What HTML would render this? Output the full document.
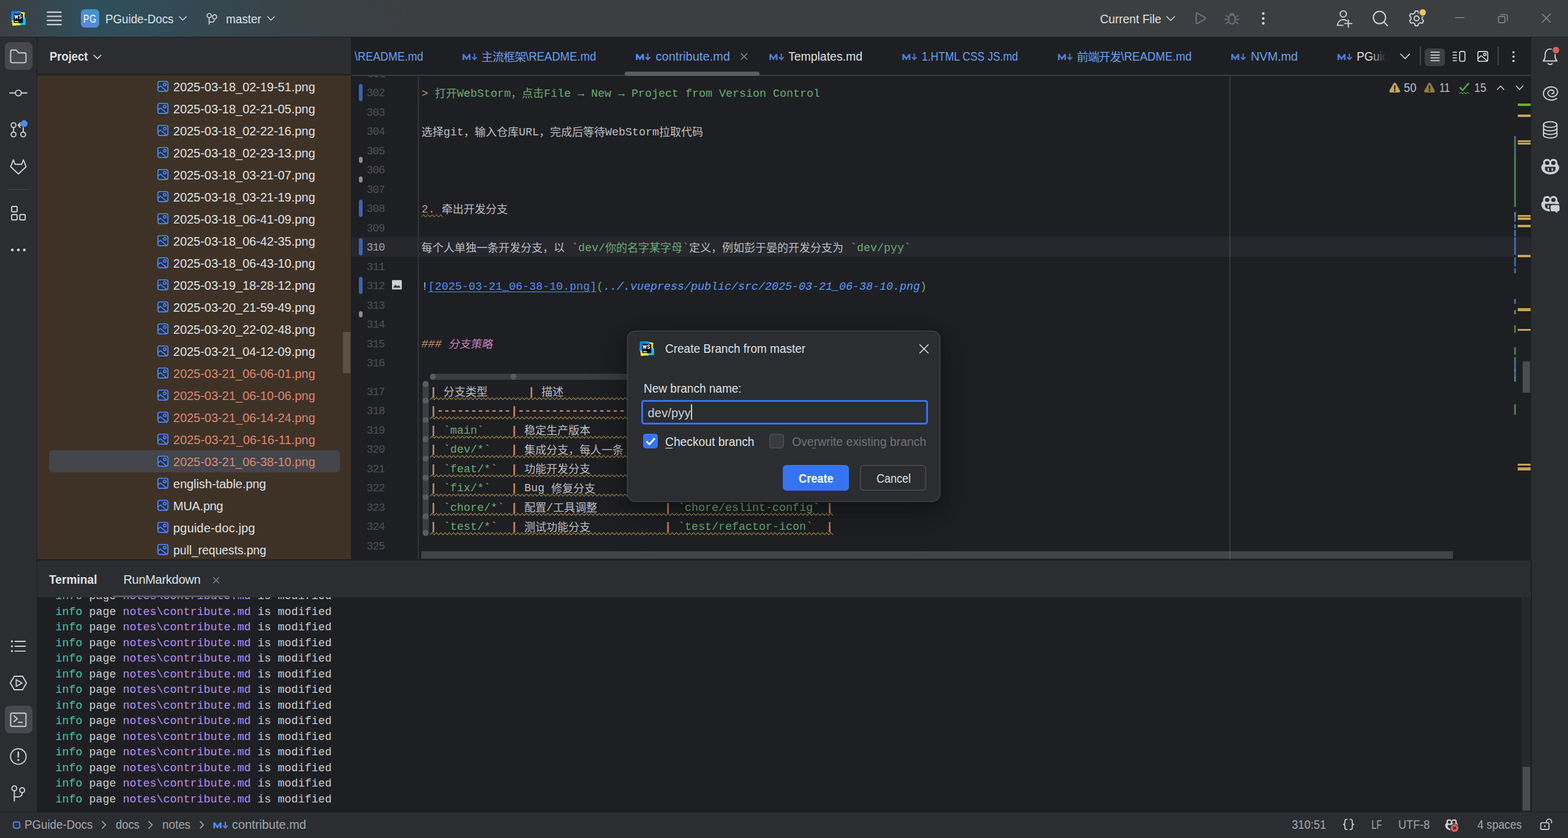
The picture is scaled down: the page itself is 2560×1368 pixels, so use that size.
<!DOCTYPE html>
<html lang="en"><head><meta charset="utf-8"><title>WebStorm – Create Branch from master</title>
<style>
html,body{margin:0;padding:0;background:#1e1f22}
body{width:2560px;height:1368px;position:relative;overflow:hidden;font-family:"Liberation Sans",sans-serif}
.a{position:absolute}
.t{position:absolute;white-space:pre;line-height:1;font-family:"Liberation Sans",sans-serif}
.m{font-family:"Liberation Mono",monospace}
.tl{position:absolute;left:90.500px;white-space:pre;line-height:1;font-family:"Liberation Mono",monospace;font-size:18.333px;color:#c9ccd2}
.ti{color:#45c8a8}.tp{color:#b78cf2}
svg{position:absolute;left:0;top:0;overflow:visible}
.ct{font-family:"Liberation Mono","Noto Sans CJK SC",monospace;font-size:18px}
.tt{font-family:"Liberation Sans","Noto Sans CJK SC",sans-serif;font-size:19px;letter-spacing:-1px}
</style></head>
<body>
<div class="a" style="left:0px;top:0px;width:2560px;height:60px;background:#3c3f41;background:linear-gradient(90deg,#3c3f42 0,#38454c 60px,#2f4f5b 150px,#324b56 260px,#37454c 400px,#3b4044 560px,#3c3f41 700px);"></div>
<div class="a" style="left:0px;top:60px;width:2560px;height:1px;background:#1e1f22;"></div>
<div class="a" style="left:132px;top:15px;width:30px;height:30px;border-radius:6.5px;background:linear-gradient(45deg,#5f86e6 10%,#4491cf 70%,#3f9ac6)"></div>
<div class="t" style="left:127px;top:20.6px;width:40px;text-align:center;font-size:19px;color:#fff;transform:scaleX(.74);letter-spacing:1.2px">PG</div>
<div class="t" style="left:171.5px;top:21.3px;font-size:20px;color:#dfe1e5;transform:scaleX(0.937);transform-origin:0 50%;">PGuide-Docs</div>
<div class="t" style="left:369px;top:21.3px;font-size:20px;color:#dfe1e5;transform:scaleX(0.941);transform-origin:0 50%;">master</div>
<div class="t" style="left:1796px;top:21.3px;font-size:20px;color:#dfe1e5;transform:scaleX(0.957);transform-origin:0 50%;">Current File</div>
<div class="a" style="left:0px;top:61px;width:60px;height:1264px;background:#2b2d30;"></div>
<div class="a" style="left:60px;top:61px;width:1px;height:853px;background:#1e1f22;"></div>
<div class="a" style="left:7.5px;top:69px;width:45px;height:45px;background:#47494e;border-radius:8px;"></div>
<div class="a" style="left:12px;top:309px;width:36px;height:1px;background:#43454a;"></div>
<div class="a" style="left:7.5px;top:1152px;width:45px;height:45px;background:#47494e;border-radius:8px;"></div>
<div class="a" style="left:2500px;top:61px;width:60px;height:1264px;background:#2b2d30;"></div>
<div class="a" style="left:61px;top:61px;width:512px;height:61px;background:#2b2d30;"></div>
<div class="a" style="left:61px;top:121px;width:512px;height:2px;background:#1e1f22;"></div>
<div class="a" style="left:61px;top:123px;width:512px;height:790px;background:#3e3226;"></div>
<div class="a" style="left:573px;top:61px;width:1px;height:852px;background:#1e1f22;"></div>
<div class="t" style="left:80.5px;top:81.9px;font-size:20px;color:#dfe1e5;font-weight:700;transform:scaleX(0.922);transform-origin:0 50%;">Project</div>
<div class="a" style="left:560px;top:542px;width:12px;height:67px;background:rgba(170,165,160,.28);"></div>
<div class="a" style="left:79.5px;top:735px;width:475.5px;height:36px;background:#43454a;border-radius:6px;"></div>
<div class="t" style="left:282.8px;top:132.1px;font-size:20px;color:#dfe1e5;letter-spacing:-0.03px;">2025-03-18_02-19-51.png</div>
<div class="t" style="left:282.8px;top:168.1px;font-size:20px;color:#dfe1e5;letter-spacing:-0.03px;">2025-03-18_02-21-05.png</div>
<div class="t" style="left:282.8px;top:204.1px;font-size:20px;color:#dfe1e5;letter-spacing:-0.03px;">2025-03-18_02-22-16.png</div>
<div class="t" style="left:282.8px;top:240.1px;font-size:20px;color:#dfe1e5;letter-spacing:-0.03px;">2025-03-18_02-23-13.png</div>
<div class="t" style="left:282.8px;top:276.1px;font-size:20px;color:#dfe1e5;letter-spacing:-0.03px;">2025-03-18_03-21-07.png</div>
<div class="t" style="left:282.8px;top:312.1px;font-size:20px;color:#dfe1e5;letter-spacing:-0.03px;">2025-03-18_03-21-19.png</div>
<div class="t" style="left:282.8px;top:348.1px;font-size:20px;color:#dfe1e5;letter-spacing:-0.03px;">2025-03-18_06-41-09.png</div>
<div class="t" style="left:282.8px;top:384.1px;font-size:20px;color:#dfe1e5;letter-spacing:-0.03px;">2025-03-18_06-42-35.png</div>
<div class="t" style="left:282.8px;top:420.1px;font-size:20px;color:#dfe1e5;letter-spacing:-0.03px;">2025-03-18_06-43-10.png</div>
<div class="t" style="left:282.8px;top:456.1px;font-size:20px;color:#dfe1e5;letter-spacing:-0.03px;">2025-03-19_18-28-12.png</div>
<div class="t" style="left:282.8px;top:492.1px;font-size:20px;color:#dfe1e5;letter-spacing:-0.03px;">2025-03-20_21-59-49.png</div>
<div class="t" style="left:282.8px;top:528.1px;font-size:20px;color:#dfe1e5;letter-spacing:-0.03px;">2025-03-20_22-02-48.png</div>
<div class="t" style="left:282.8px;top:564.1px;font-size:20px;color:#dfe1e5;letter-spacing:-0.03px;">2025-03-21_04-12-09.png</div>
<div class="t" style="left:282.8px;top:600.1px;font-size:20px;color:#dc8673;letter-spacing:-0.03px;">2025-03-21_06-06-01.png</div>
<div class="t" style="left:282.8px;top:636.1px;font-size:20px;color:#dc8673;letter-spacing:-0.03px;">2025-03-21_06-10-06.png</div>
<div class="t" style="left:282.8px;top:672.1px;font-size:20px;color:#dc8673;letter-spacing:-0.03px;">2025-03-21_06-14-24.png</div>
<div class="t" style="left:282.8px;top:708.1px;font-size:20px;color:#dc8673;letter-spacing:0.04px;">2025-03-21_06-16-11.png</div>
<div class="t" style="left:282.8px;top:744.1px;font-size:20px;color:#dc8673;letter-spacing:-0.03px;">2025-03-21_06-38-10.png</div>
<div class="t" style="left:282.8px;top:780.1px;font-size:20px;color:#dfe1e5;letter-spacing:-0.04px;">english-table.png</div>
<div class="t" style="left:282.8px;top:816.1px;font-size:20px;color:#dfe1e5;letter-spacing:-0.28px;">MUA.png</div>
<div class="t" style="left:282.8px;top:852.1px;font-size:20px;color:#dfe1e5;letter-spacing:0.19px;">pguide-doc.jpg</div>
<div class="t" style="left:282.8px;top:888.1px;font-size:20px;color:#dfe1e5;transform:scaleX(0.961);transform-origin:0 50%;">pull_requests.png</div>
<div class="a" style="left:574px;top:61px;width:1926px;height:852px;background:#1e1f22;"></div>
<div class="a" style="left:574px;top:387px;width:1925px;height:31.5px;background:#26282e;"></div>
<div class="t" style="left:579px;top:81.9px;font-size:20px;color:#659ff2;transform:scaleX(0.9);transform-origin:0 50%;">\README.md</div>
<div class="t" style="left:1070.5px;top:81.9px;font-size:20px;color:#659ff2;letter-spacing:0.02px;">contribute.md</div>
<div class="t" style="left:1287px;top:81.9px;font-size:20px;color:#dfe1e5;transform:scaleX(0.972);transform-origin:0 50%;">Templates.md</div>
<div class="t" style="left:1505px;top:81.9px;font-size:20px;color:#659ff2;transform:scaleX(0.876);transform-origin:0 50%;">1.HTML CSS JS.md</div>
<div class="t" style="left:2042px;top:81.9px;font-size:20px;color:#659ff2;letter-spacing:-0.16px;">NVM.md</div>
<div class="t" style="left:858.2px;top:81.9px;font-size:20px;color:#659ff2;transform:scaleX(0.926);transform-origin:0 50%;">\README.md</div>
<div class="t" style="left:1830.2px;top:81.9px;font-size:20px;color:#659ff2;transform:scaleX(0.929);transform-origin:0 50%;">\README.md</div>
<div class="a" style="left:2210px;top:70px;width:54px;height:44px;overflow:hidden">
<div class="t" style="left:4.5px;top:11.9px;font-size:20px;color:#dfe1e5;transform:scaleX(0.937);transform-origin:0 50%;">PGuide-Docs</div>
</div>
<div class="a" style="left:2236px;top:70px;width:44px;height:44px;background:linear-gradient(90deg,rgba(30,31,34,0),#1e1f22 62%)"></div>
<div class="a" style="left:2318.2px;top:76px;width:1.5px;height:30px;background:#43454a;"></div>
<div class="a" style="left:2326.4px;top:78.5px;width:33px;height:29.5px;background:#3d3f42;border-radius:6px;"></div>
<div class="a" style="left:2445.2px;top:76px;width:1.5px;height:30px;background:#43454a;"></div>
<div class="a" style="left:574px;top:122px;width:1926px;height:1.8px;background:#393b40;"></div>
<div class="a" style="left:1020px;top:117px;width:219.5px;height:6.5px;background:#5a5d63;border-radius:3.25px;"></div>
<div class="a" style="left:682px;top:123.8px;width:2px;height:789px;background:#313438;"></div>
<div class="a" style="left:574px;top:123.5px;width:110px;height:12px;overflow:hidden"><div class="t m" style="left:25.5px;top:-11.4px;font-size:18px;letter-spacing:-1.05px;color:#4b5059">301</div></div>
<div class="t m" style="left:598.6px;top:143.4px;font-size:18px;color:#4b5059;letter-spacing:-1.05px;">302</div>
<div class="t m" style="left:598.6px;top:174.9px;font-size:18px;color:#4b5059;letter-spacing:-1.05px;">303</div>
<div class="t m" style="left:598.6px;top:206.4px;font-size:18px;color:#4b5059;letter-spacing:-1.05px;">304</div>
<div class="t m" style="left:598.6px;top:237.9px;font-size:18px;color:#4b5059;letter-spacing:-1.05px;">305</div>
<div class="t m" style="left:598.6px;top:269.4px;font-size:18px;color:#4b5059;letter-spacing:-1.05px;">306</div>
<div class="t m" style="left:598.6px;top:300.9px;font-size:18px;color:#4b5059;letter-spacing:-1.05px;">307</div>
<div class="t m" style="left:598.6px;top:332.4px;font-size:18px;color:#4b5059;letter-spacing:-1.05px;">308</div>
<div class="t m" style="left:598.6px;top:363.9px;font-size:18px;color:#4b5059;letter-spacing:-1.05px;">309</div>
<div class="t m" style="left:598.6px;top:395.4px;font-size:18px;color:#a1a3ab;letter-spacing:-1.05px;">310</div>
<div class="t m" style="left:598.6px;top:426.9px;font-size:18px;color:#4b5059;letter-spacing:-1.05px;">311</div>
<div class="t m" style="left:598.6px;top:458.4px;font-size:18px;color:#4b5059;letter-spacing:-1.05px;">312</div>
<div class="t m" style="left:598.6px;top:489.9px;font-size:18px;color:#4b5059;letter-spacing:-1.05px;">313</div>
<div class="t m" style="left:598.6px;top:521.4px;font-size:18px;color:#4b5059;letter-spacing:-1.05px;">314</div>
<div class="t m" style="left:598.6px;top:552.9px;font-size:18px;color:#4b5059;letter-spacing:-1.05px;">315</div>
<div class="t m" style="left:598.6px;top:584.4px;font-size:18px;color:#4b5059;letter-spacing:-1.05px;">316</div>
<div class="t m" style="left:598.6px;top:630.6px;font-size:18px;color:#4b5059;letter-spacing:-1.05px;">317</div>
<div class="t m" style="left:598.6px;top:662.1px;font-size:18px;color:#4b5059;letter-spacing:-1.05px;">318</div>
<div class="t m" style="left:598.6px;top:693.6px;font-size:18px;color:#4b5059;letter-spacing:-1.05px;">319</div>
<div class="t m" style="left:598.6px;top:725.1px;font-size:18px;color:#4b5059;letter-spacing:-1.05px;">320</div>
<div class="t m" style="left:598.6px;top:756.6px;font-size:18px;color:#4b5059;letter-spacing:-1.05px;">321</div>
<div class="t m" style="left:598.6px;top:788.1px;font-size:18px;color:#4b5059;letter-spacing:-1.05px;">322</div>
<div class="t m" style="left:598.6px;top:819.6px;font-size:18px;color:#4b5059;letter-spacing:-1.05px;">323</div>
<div class="t m" style="left:598.6px;top:851.1px;font-size:18px;color:#4b5059;letter-spacing:-1.05px;">324</div>
<div class="t m" style="left:598.6px;top:882.6px;font-size:18px;color:#4b5059;letter-spacing:-1.05px;">325</div>
<div class="a" style="left:585.5px;top:136.75px;width:6px;height:28.5px;background:#3a64b8;border-radius:3px;"></div>
<div class="a" style="left:585.5px;top:325.75px;width:6px;height:28.5px;background:#3a64b8;border-radius:3px;"></div>
<div class="a" style="left:585.5px;top:388.75px;width:6px;height:28.5px;background:#3a64b8;border-radius:3px;"></div>
<div class="a" style="left:585.5px;top:451.75px;width:6px;height:28.5px;background:#3a64b8;border-radius:3px;"></div>
<div class="a" style="left:585.5px;top:256.3px;width:6px;height:9.4px;background:#8a8d94;border-radius:3px;"></div>
<div class="a" style="left:585.5px;top:288.3px;width:6px;height:9.4px;background:#8a8d94;border-radius:3px;"></div>
<div class="a" style="left:585.5px;top:508.3px;width:6px;height:9.4px;background:#8a8d94;border-radius:3px;"></div>
<div class="t m" style="left:688px;top:144.5px;font-size:18.333px;color:#cf8e6d;">&gt;</div>
<div class="t m" style="left:746px;top:144.5px;font-size:18.333px;color:#6aab73;">WebStorm</div>
<div class="t m" style="left:888px;top:144.5px;font-size:18.333px;color:#6aab73;">File → New → Project from Version Control</div>
<div class="t m" style="left:724px;top:207.5px;font-size:18.333px;color:#bcbec4;">git</div>
<div class="t m" style="left:847px;top:207.5px;font-size:18.333px;color:#bcbec4;">URL</div>
<div class="t m" style="left:988px;top:207.5px;font-size:18.333px;color:#bcbec4;">WebStorm</div>
<div class="t m" style="left:688px;top:333.5px;font-size:18.333px;color:#cf8e6d;">2.</div>
<div class="t m" style="left:933px;top:396.5px;font-size:18.333px;color:#cf8e6d;">`</div>
<div class="t m" style="left:944px;top:396.5px;font-size:18.333px;color:#6aab73;">dev/</div>
<div class="t m" style="left:1114px;top:396.5px;font-size:18.333px;color:#cf8e6d;">`</div>
<div class="t m" style="left:1388px;top:396.5px;font-size:18.333px;color:#cf8e6d;">`</div>
<div class="t m" style="left:1399px;top:396.5px;font-size:18.333px;color:#6aab73;">dev/pyy</div>
<div class="t m" style="left:1476px;top:396.5px;font-size:18.333px;color:#cf8e6d;">`</div>
<div class="t m" style="left:688px;top:459.5px;font-size:18.333px;color:#bcbec4;">!</div>
<div class="t m" style="left:699px;top:459.5px;font-size:18.333px;color:#548af7;text-decoration:underline;text-decoration-thickness:1.3px;text-underline-offset:3px;">[2025-03-21_06-38-10.png]</div>
<div class="t m" style="left:974px;top:459.5px;font-size:18.333px;color:#6aab73;">(</div>
<div class="t m" style="left:985px;top:459.5px;font-size:18.333px;color:#5c9cf5;font-style:italic;">../.vuepress/public/src/2025-03-21_06-38-10.png</div>
<div class="t m" style="left:1502px;top:459.5px;font-size:18.333px;color:#6aab73;">)</div>
<div class="t m" style="left:688px;top:554px;font-size:18.333px;color:#cf8e6d;font-style:italic;">###</div>
<div class="t m" style="left:702px;top:631.8px;font-size:18.333px;color:#cf8e6d;font-weight:700;">|</div>
<div class="t m" style="left:862px;top:631.8px;font-size:18.333px;color:#cf8e6d;font-weight:700;">|</div>
<div class="t m" style="left:702px;top:663.3px;font-size:18.333px;color:#cf8e6d;font-weight:700;">|</div>
<div class="t m" style="left:713px;top:663.3px;font-size:18.333px;color:#cf8e6d;font-weight:700;">-----------</div>
<div class="t m" style="left:834px;top:663.3px;font-size:18.333px;color:#cf8e6d;font-weight:700;">|</div>
<div class="t m" style="left:845px;top:663.3px;font-size:18.333px;color:#cf8e6d;font-weight:700;">------------------------------</div>
<div class="t m" style="left:702px;top:694.8px;font-size:18.333px;color:#cf8e6d;font-weight:700;">|</div>
<div class="t m" style="left:724px;top:694.8px;font-size:18.333px;color:#cf8e6d;">`</div>
<div class="t m" style="left:735px;top:694.8px;font-size:18.333px;color:#6aab73;">main</div>
<div class="t m" style="left:779px;top:694.8px;font-size:18.333px;color:#cf8e6d;">`</div>
<div class="t m" style="left:834px;top:694.8px;font-size:18.333px;color:#cf8e6d;font-weight:700;">|</div>
<div class="t m" style="left:702px;top:726.3px;font-size:18.333px;color:#cf8e6d;font-weight:700;">|</div>
<div class="t m" style="left:724px;top:726.3px;font-size:18.333px;color:#cf8e6d;">`</div>
<div class="t m" style="left:735px;top:726.3px;font-size:18.333px;color:#6aab73;">dev/*</div>
<div class="t m" style="left:790px;top:726.3px;font-size:18.333px;color:#cf8e6d;">`</div>
<div class="t m" style="left:834px;top:726.3px;font-size:18.333px;color:#cf8e6d;font-weight:700;">|</div>
<div class="t m" style="left:702px;top:757.8px;font-size:18.333px;color:#cf8e6d;font-weight:700;">|</div>
<div class="t m" style="left:724px;top:757.8px;font-size:18.333px;color:#cf8e6d;">`</div>
<div class="t m" style="left:735px;top:757.8px;font-size:18.333px;color:#6aab73;">feat/*</div>
<div class="t m" style="left:801px;top:757.8px;font-size:18.333px;color:#cf8e6d;">`</div>
<div class="t m" style="left:834px;top:757.8px;font-size:18.333px;color:#cf8e6d;font-weight:700;">|</div>
<div class="t m" style="left:702px;top:789.3px;font-size:18.333px;color:#cf8e6d;font-weight:700;">|</div>
<div class="t m" style="left:724px;top:789.3px;font-size:18.333px;color:#cf8e6d;">`</div>
<div class="t m" style="left:735px;top:789.3px;font-size:18.333px;color:#6aab73;">fix/*</div>
<div class="t m" style="left:790px;top:789.3px;font-size:18.333px;color:#cf8e6d;">`</div>
<div class="t m" style="left:834px;top:789.3px;font-size:18.333px;color:#cf8e6d;font-weight:700;">|</div>
<div class="t m" style="left:856px;top:789.3px;font-size:18.333px;color:#bcbec4;">Bug </div>
<div class="t m" style="left:702px;top:820.8px;font-size:18.333px;color:#cf8e6d;font-weight:700;">|</div>
<div class="t m" style="left:724px;top:820.8px;font-size:18.333px;color:#cf8e6d;">`</div>
<div class="t m" style="left:735px;top:820.8px;font-size:18.333px;color:#6aab73;">chore/*</div>
<div class="t m" style="left:812px;top:820.8px;font-size:18.333px;color:#cf8e6d;">`</div>
<div class="t m" style="left:834px;top:820.8px;font-size:18.333px;color:#cf8e6d;font-weight:700;">|</div>
<div class="t m" style="left:892px;top:820.8px;font-size:18.333px;color:#bcbec4;">/</div>
<div class="t m" style="left:1085px;top:820.8px;font-size:18.333px;color:#cf8e6d;font-weight:700;">|</div>
<div class="t m" style="left:1107px;top:820.8px;font-size:18.333px;color:#cf8e6d;">`</div>
<div class="t m" style="left:1118px;top:820.8px;font-size:18.333px;color:#6aab73;">chore/eslint-config</div>
<div class="t m" style="left:1327px;top:820.8px;font-size:18.333px;color:#cf8e6d;">`</div>
<div class="t m" style="left:1349px;top:820.8px;font-size:18.333px;color:#cf8e6d;font-weight:700;">|</div>
<div class="t m" style="left:702px;top:852.3px;font-size:18.333px;color:#cf8e6d;font-weight:700;">|</div>
<div class="t m" style="left:724px;top:852.3px;font-size:18.333px;color:#cf8e6d;">`</div>
<div class="t m" style="left:735px;top:852.3px;font-size:18.333px;color:#6aab73;">test/*</div>
<div class="t m" style="left:801px;top:852.3px;font-size:18.333px;color:#cf8e6d;">`</div>
<div class="t m" style="left:834px;top:852.3px;font-size:18.333px;color:#cf8e6d;font-weight:700;">|</div>
<div class="t m" style="left:1085px;top:852.3px;font-size:18.333px;color:#cf8e6d;font-weight:700;">|</div>
<div class="t m" style="left:1107px;top:852.3px;font-size:18.333px;color:#cf8e6d;">`</div>
<div class="t m" style="left:1118px;top:852.3px;font-size:18.333px;color:#6aab73;">test/refactor-icon</div>
<div class="t m" style="left:1316px;top:852.3px;font-size:18.333px;color:#cf8e6d;">`</div>
<div class="t m" style="left:1349px;top:852.3px;font-size:18.333px;color:#cf8e6d;font-weight:700;">|</div>
<div class="a" style="left:702px;top:610px;width:660px;height:9.5px;background:#3b3d41;border-radius:4.7px;"></div>
<div class="a" style="left:701.6px;top:610px;width:9.5px;height:9.5px;background:#595b60;border-radius:4.7px;"></div>
<div class="a" style="left:833.9px;top:610px;width:9.5px;height:9.5px;background:#595b60;border-radius:4.7px;"></div>
<div class="a" style="left:1085.9px;top:610px;width:9.5px;height:9.5px;background:#595b60;border-radius:4.7px;"></div>
<div class="a" style="left:1349.9px;top:610px;width:9.5px;height:9.5px;background:#595b60;border-radius:4.7px;"></div>
<div class="a" style="left:690px;top:622.5px;width:9.5px;height:252px;background:#3b3d41;border-radius:4.7px;"></div>
<div class="a" style="left:690px;top:622.3px;width:9.5px;height:9.5px;background:#595b60;border-radius:4.7px;"></div>
<div class="a" style="left:690px;top:649.05px;width:9.5px;height:9.5px;background:#595b60;border-radius:4.7px;"></div>
<div class="a" style="left:690px;top:680.8px;width:9.5px;height:9.5px;background:#595b60;border-radius:4.7px;"></div>
<div class="a" style="left:690px;top:712.3px;width:9.5px;height:9.5px;background:#595b60;border-radius:4.7px;"></div>
<div class="a" style="left:690px;top:743.8px;width:9.5px;height:9.5px;background:#595b60;border-radius:4.7px;"></div>
<div class="a" style="left:690px;top:775.3px;width:9.5px;height:9.5px;background:#595b60;border-radius:4.7px;"></div>
<div class="a" style="left:690px;top:806.8px;width:9.5px;height:9.5px;background:#595b60;border-radius:4.7px;"></div>
<div class="a" style="left:690px;top:838.3px;width:9.5px;height:9.5px;background:#595b60;border-radius:4.7px;"></div>
<div class="a" style="left:690px;top:865.3px;width:9.5px;height:9.5px;background:#595b60;border-radius:4.7px;"></div>
<div class="a" style="left:688px;top:899.7px;width:1684.3px;height:12.3px;background:#434446;"></div>
<div class="a" style="left:2007px;top:123.8px;width:2px;height:789px;background:rgba(232,238,255,.12);"></div>
<div class="t" style="left:2291.8px;top:133.5px;font-size:19.5px;color:#bcbec4;transform:scaleX(0.95);transform-origin:0 50%;">50</div>
<div class="t" style="left:2349.8px;top:133.5px;font-size:19.5px;color:#bcbec4;transform:scaleX(0.86);transform-origin:0 50%;">11</div>
<div class="t" style="left:2406.5px;top:133.5px;font-size:19.5px;color:#bcbec4;transform:scaleX(0.895);transform-origin:0 50%;">15</div>
<div class="a" style="left:2478px;top:187px;width:21px;height:4px;background:#c9a44f;"></div>
<div class="a" style="left:2478px;top:229px;width:21px;height:3px;background:#c9a44f;"></div>
<div class="a" style="left:2478px;top:233px;width:21px;height:3px;background:#c9a44f;"></div>
<div class="a" style="left:2478px;top:350.8px;width:21px;height:3.2px;background:#c9a44f;"></div>
<div class="a" style="left:2478px;top:355px;width:21px;height:3.7px;background:#c9a44f;"></div>
<div class="a" style="left:2478px;top:366.8px;width:21px;height:4px;background:#c9a44f;"></div>
<div class="a" style="left:2478px;top:415.5px;width:21px;height:4.5px;background:#c9a44f;"></div>
<div class="a" style="left:2478px;top:503px;width:21px;height:5px;background:#c9a44f;"></div>
<div class="a" style="left:2478px;top:537px;width:21px;height:3px;background:#c9a44f;"></div>
<div class="a" style="left:2478px;top:757px;width:21px;height:3px;background:#c9a44f;"></div>
<div class="a" style="left:2478px;top:763px;width:21px;height:5px;background:#c9a44f;"></div>
<div class="a" style="left:2478px;top:169.2px;width:21px;height:3.7px;background:#6bb01f;"></div>
<div class="a" style="left:2472px;top:222px;width:3px;height:7.5px;background:#40699c;"></div>
<div class="a" style="left:2472px;top:229.5px;width:3px;height:13.3px;background:#4a7a52;"></div>
<div class="a" style="left:2472px;top:242.8px;width:3px;height:9.2px;background:#40699c;"></div>
<div class="a" style="left:2472px;top:252px;width:3px;height:86px;background:#4a7a52;"></div>
<div class="a" style="left:2472px;top:346px;width:3px;height:7.7px;background:#6f737a;"></div>
<div class="a" style="left:2472px;top:353.7px;width:3px;height:7.9px;background:#40699c;"></div>
<div class="a" style="left:2472px;top:365.8px;width:3px;height:7.6px;background:#40699c;"></div>
<div class="a" style="left:2472px;top:374.7px;width:3px;height:11px;background:#40699c;"></div>
<div class="a" style="left:2472px;top:386.6px;width:3px;height:29.4px;background:#40699c;"></div>
<div class="a" style="left:2472px;top:420px;width:3px;height:15px;background:#40699c;"></div>
<div class="a" style="left:2472px;top:437.5px;width:3px;height:8.5px;background:#40699c;"></div>
<div class="a" style="left:2472px;top:488px;width:3px;height:8px;background:#40699c;"></div>
<div class="a" style="left:2472px;top:505.5px;width:3px;height:7.5px;background:#6f737a;"></div>
<div class="a" style="left:2472px;top:531px;width:3px;height:12px;background:#4a7a52;"></div>
<div class="a" style="left:2472px;top:567px;width:3px;height:12px;background:#4a7a52;"></div>
<div class="a" style="left:2472px;top:583.2px;width:3px;height:7.9px;background:#4a7a52;"></div>
<div class="a" style="left:2472px;top:591.1px;width:3px;height:11.9px;background:#40699c;"></div>
<div class="a" style="left:2472px;top:603px;width:3px;height:3px;background:#6f737a;"></div>
<div class="a" style="left:2472px;top:606px;width:3px;height:9px;background:#40699c;"></div>
<div class="a" style="left:2472px;top:615px;width:3px;height:7.5px;background:#6f737a;"></div>
<div class="a" style="left:2472px;top:660px;width:3px;height:16.5px;background:#4a7a52;"></div>
<div class="a" style="left:2484.5px;top:588px;width:15px;height:54px;background:#222326;"></div>
<div class="a" style="left:2486px;top:590px;width:12.2px;height:51px;background:#4b4c4f;"></div>
<div class="a" style="left:61px;top:913px;width:2439px;height:2px;background:#1e1f22;"></div>
<div class="a" style="left:61px;top:915px;width:2439px;height:60px;background:#2b2d30;"></div>
<div class="a" style="left:61px;top:975px;width:2439px;height:350px;background:#1e1f22;"></div>
<div class="t" style="left:80.3px;top:935.8px;font-size:20px;color:#dfe1e5;font-weight:700;transform:scaleX(0.959);transform-origin:0 50%;">Terminal</div>
<div class="t" style="left:201.4px;top:935.8px;font-size:20px;color:#dfe1e5;letter-spacing:-0.28px;">RunMarkdown</div>
<div class="a" style="left:184px;top:972px;width:191px;height:3px;overflow:hidden"><div class="a" style="left:0;top:0;width:191px;height:6.5px;border-radius:3.25px;background:#54575c"></div></div>
<div class="a" style="left:61px;top:975px;width:2439px;height:350px;overflow:hidden"><div class="a" style="left:-61px;top:-975px"><div class="tl" style="top:965.3px"><span class="ti">info</span> page <span class="tp">notes\contribute.md</span> is modified</div><div class="tl" style="top:990.8px"><span class="ti">info</span> page <span class="tp">notes\contribute.md</span> is modified</div><div class="tl" style="top:1016.3px"><span class="ti">info</span> page <span class="tp">notes\contribute.md</span> is modified</div><div class="tl" style="top:1041.8px"><span class="ti">info</span> page <span class="tp">notes\contribute.md</span> is modified</div><div class="tl" style="top:1067.3px"><span class="ti">info</span> page <span class="tp">notes\contribute.md</span> is modified</div><div class="tl" style="top:1092.8px"><span class="ti">info</span> page <span class="tp">notes\contribute.md</span> is modified</div><div class="tl" style="top:1118.3px"><span class="ti">info</span> page <span class="tp">notes\contribute.md</span> is modified</div><div class="tl" style="top:1143.8px"><span class="ti">info</span> page <span class="tp">notes\contribute.md</span> is modified</div><div class="tl" style="top:1169.3px"><span class="ti">info</span> page <span class="tp">notes\contribute.md</span> is modified</div><div class="tl" style="top:1194.8px"><span class="ti">info</span> page <span class="tp">notes\contribute.md</span> is modified</div><div class="tl" style="top:1220.3px"><span class="ti">info</span> page <span class="tp">notes\contribute.md</span> is modified</div><div class="tl" style="top:1245.8px"><span class="ti">info</span> page <span class="tp">notes\contribute.md</span> is modified</div><div class="tl" style="top:1271.3px"><span class="ti">info</span> page <span class="tp">notes\contribute.md</span> is modified</div><div class="tl" style="top:1296.8px"><span class="ti">info</span> page <span class="tp">notes\contribute.md</span> is modified</div></div></div>
<div class="a" style="left:2484px;top:975px;width:15px;height:349.5px;background:#27282c;"></div>
<div class="a" style="left:2486px;top:1252px;width:12.2px;height:71px;background:#4b4c4f;"></div>
<div class="a" style="left:2499px;top:915px;width:1.5px;height:410px;background:#1e1f22;"></div>
<div class="a" style="left:0px;top:1325px;width:2560px;height:1px;background:#1e1f22;"></div>
<div class="a" style="left:0px;top:1326px;width:2560px;height:42px;background:#2b2d30;"></div>
<div class="t" style="left:39.5px;top:1335.5px;font-size:20px;color:#a3a6ad;transform:scaleX(0.936);transform-origin:0 50%;">PGuide-Docs</div>
<div class="t" style="left:188.8px;top:1335.5px;font-size:20px;color:#a3a6ad;transform:scaleX(0.916);transform-origin:0 50%;">docs</div>
<div class="t" style="left:264.5px;top:1335.5px;font-size:20px;color:#a3a6ad;transform:scaleX(0.94);transform-origin:0 50%;">notes</div>
<div class="t" style="left:378.8px;top:1335.5px;font-size:20px;color:#a3a6ad;">contribute.md</div>
<div class="t" style="left:2108.8px;top:1335.6px;font-size:20px;color:#a3a6ad;transform:scaleX(0.919);transform-origin:0 50%;">310:51</div>
<div class="t" style="left:2238.8px;top:1335.6px;font-size:20px;color:#a3a6ad;transform:scaleX(0.737);transform-origin:0 50%;">LF</div>
<div class="t" style="left:2282.5px;top:1335.6px;font-size:20px;color:#a3a6ad;transform:scaleX(0.905);transform-origin:0 50%;">UTF-8</div>
<div class="t" style="left:2412px;top:1335.6px;font-size:20px;color:#a3a6ad;transform:scaleX(0.906);transform-origin:0 50%;">4 spaces</div>
<svg width="2560" height="1368" viewBox="0 0 2560 1368">
<g transform="translate(18,18)"><defs><linearGradient id="wsg0" x1="0" y1="0" x2="1" y2="1"><stop offset="0" stop-color="#087cfa"/><stop offset=".55" stop-color="#07a5f5"/><stop offset="1" stop-color="#12d6e8"/></linearGradient></defs><path d="M.6 1.2Q.6.3 1.6.3L14.5 0 24 12 23.6 22.5 12 23.2 0 15.8Z" fill="url(#wsg0)"/><path d="M15.5 1.6L22.6 2.6 21.2 13.5ZM1.4 15.6L2.4 24 16 23 10 16.5Z" fill="#f7ef3c"/><path d="M9 22.8L16 23 23.6 22.4 23.8 17Z" fill="#1fd1a0" opacity=".0"/><rect x="4.5" y="4.4" width="14.8" height="14.9" fill="#000"/><rect x="6.2" y="16.4" width="6" height="1.5" fill="#fff"/><path d="M6 6.2l1.25 5.5 1.4-4.3 1.4 4.3 1.25-5.5M16.9 7.3c-.45-.7-1.1-1-1.85-1-1 0-1.7.55-1.7 1.35 0 .85.6 1.15 1.75 1.45 1.2.3 1.85.65 1.85 1.5 0 .85-.75 1.4-1.85 1.4-.85 0-1.6-.35-2.1-1.05" fill="none" stroke="#fff" stroke-width="1.4" stroke-linejoin="miter"/></g>
<path d="M77.4 19.9 H99.8" stroke="#ced0d6" stroke-width="2.2" stroke-linecap="round"/>
<path d="M77.4 26.6 H99.8" stroke="#ced0d6" stroke-width="2.2" stroke-linecap="round"/>
<path d="M77.4 33.4 H99.8" stroke="#ced0d6" stroke-width="2.2" stroke-linecap="round"/>
<path d="M77.4 40.1 H99.8" stroke="#ced0d6" stroke-width="2.2" stroke-linecap="round"/>
<path d="M293 27.25 l5.5 5.5 l5.5 -5.5" fill="none" stroke="#ced0d6" stroke-width="1.6" stroke-linecap="round" stroke-linejoin="round"/>
<g fill="none" stroke="#ced0d6" stroke-width="1.7" stroke-linecap="round"><circle cx="341.5" cy="25.4" r="3.4"/><circle cx="350.3" cy="27.6" r="3.4"/><path d="M341.5 28.8V39.5M350.3 31v.6a4.6 4.6 0 0 1-4.6 4.6H341.5"/></g>
<path d="M437 27.25 l5.5 5.5 l5.5 -5.5" fill="none" stroke="#ced0d6" stroke-width="1.6" stroke-linecap="round" stroke-linejoin="round"/>
<path d="M1904.8 27.05 l6.5 6.5 l6.5 -6.5" fill="none" stroke="#ced0d6" stroke-width="1.6" stroke-linecap="round" stroke-linejoin="round"/>
<path d="M1953 22.4V37.2a1.3 1.3 0 0 0 2 1.1l12.6-7.4a1.3 1.3 0 0 0 0-2.2L1955 21.3a1.3 1.3 0 0 0-2 1.1Z" fill="none" stroke="#6f737a" stroke-width="2" stroke-linejoin="round"/>
<g fill="none" stroke="#6f737a" stroke-width="1.8" stroke-linecap="round"><path d="M2006.4 29.5a5 5 0 0 1 10 0v4.6a5 5 0 0 1-10 0Z"/><path d="M2007.6 25.6a3.9 4.6 0 0 1 7.6 0"/><path d="M2006 28l-4.3-2.6M2006 31.6h-5.6M2006 35.6l-4.3 2.6M2016.8 28l4.3-2.6M2016.8 31.6h5.6M2016.8 35.6l4.3 2.6"/></g>
<circle cx="2062.5" cy="22" r="2.1" fill="#dfe1e5"/>
<circle cx="2062.5" cy="30.2" r="2.1" fill="#dfe1e5"/>
<circle cx="2062.5" cy="38.2" r="2.1" fill="#dfe1e5"/>
<g fill="none" stroke="#ced0d6" stroke-width="1.9" stroke-linecap="round" stroke-linejoin="round"><circle cx="2193.1" cy="22.7" r="5.1"/><path d="M2192.5 41.4H2183.4c.8-5.6 4.6-9.4 9.7-9.4 2.3 0 4.3.7 5.9 2"/><path d="M2201.4 32.6v11.6M2195.6 38.4h11.6"/></g>
<g fill="none" stroke="#ced0d6" stroke-width="2" stroke-linecap="round"><circle cx="2252.2" cy="28.6" r="10"/><path d="M2259.6 35.9L2265.3 42"/></g>
<path d="M2309.7 21.3L2310.6 18L2315 18L2315.9 21.3L2318.7 23L2322.1 22.1L2324.3 25.9L2321.9 28.4L2321.9 31.6L2324.3 34.1L2322.1 37.9L2318.7 37L2315.9 38.7L2315 42L2310.6 42L2309.7 38.7L2306.9 37L2303.5 37.9L2301.3 34.1L2303.7 31.6L2303.7 28.4L2301.3 25.9L2303.5 22.1L2306.9 23Z" fill="none" stroke="#ced0d6" stroke-width="1.9" stroke-linejoin="round"/><circle cx="2312.8" cy="30" r="4" fill="none" stroke="#ced0d6" stroke-width="1.9"/>
<circle cx="2322.8" cy="20.3" r="6.6" fill="#3c3f41"/><circle cx="2322.8" cy="20.3" r="5.2" fill="#f2c55c"/>
<path d="M2376 28.8H2391" stroke="#8b8d92" stroke-width="1.4"/>
<g fill="none" stroke="#8b8d92" stroke-width="1.4"><rect x="2446.5" y="26.7" width="10.6" height="10.3" rx="2"/><path d="M2449.8 23.6h8.2a3 3 0 0 1 3 3v7.7"/></g>
<path d="M2517.5 22.5l14.2 14.2M2531.7 22.5l-14.2 14.2" stroke="#8b8d92" stroke-width="1.4"/>
<path d="M17.4 84.3a2.5 2.5 0 0 1 2.5-2.5h6.6l4 4.5h9.4a2.5 2.5 0 0 1 2.5 2.5v11.1a2.5 2.5 0 0 1-2.5 2.5h-20a2.5 2.5 0 0 1-2.5-2.5Z" fill="none" stroke="#ced0d6" stroke-width="1.9" stroke-linecap="round" stroke-linejoin="round"/>
<g fill="none" stroke="#ced0d6" stroke-width="1.9" stroke-linecap="round" stroke-linejoin="round"><circle cx="30" cy="151.8" r="4.7"/><path d="M16 151.8h9.3M34.7 151.8H44"/></g>
<g fill="none" stroke="#ced0d6" stroke-width="1.9" stroke-linecap="round" stroke-linejoin="round" stroke-width="1.8"><circle cx="22.1" cy="204.3" r="3.9"/><circle cx="22.1" cy="219.5" r="3.9"/><circle cx="37.9" cy="219.5" r="3.9"/><path d="M22.1 208.2v7.4M37.9 208.5v7.1M33 200.6l-3.6 3.7 3.6 3.7M29.6 204.3h4.4"/></g>
<circle cx="39.5" cy="201.8" r="5.5" fill="#548af7"/>
<path d="M21.7 261L17.5 272.2 30 284 42.5 272.2 38.3 261 35.3 268.3H24.7Z" fill="none" stroke="#ced0d6" stroke-width="1.9" stroke-linecap="round" stroke-linejoin="round"/>
<g fill="none" stroke="#ced0d6" stroke-width="1.9" stroke-linecap="round" stroke-linejoin="round"><rect x="19" y="337" width="9" height="8.7" rx="2"/><rect x="19" y="350.2" width="9" height="8.8" rx="2"/><rect x="32.2" y="350.2" width="9" height="8.8" rx="2"/></g>
<circle cx="20.1" cy="408" r="2.3" fill="#ced0d6"/>
<circle cx="30" cy="408" r="2.3" fill="#ced0d6"/>
<circle cx="39.7" cy="408" r="2.3" fill="#ced0d6"/>
<circle cx="19.5" cy="1047" r="1.7" fill="#ced0d6"/><path d="M24.6 1047H41.2" stroke="#ced0d6" stroke-width="1.9" stroke-linecap="round"/>
<circle cx="19.5" cy="1055" r="1.7" fill="#ced0d6"/><path d="M24.6 1055H41.2" stroke="#ced0d6" stroke-width="1.9" stroke-linecap="round"/>
<circle cx="19.5" cy="1062.9" r="1.7" fill="#ced0d6"/><path d="M24.6 1062.9H41.2" stroke="#ced0d6" stroke-width="1.9" stroke-linecap="round"/>
<g fill="none" stroke="#ced0d6" stroke-width="1.9" stroke-linecap="round" stroke-linejoin="round"><path d="M16.8 1115L23.4 1104H36.8L43.2 1115 36.8 1126H23.4Z"/><path d="M26.5 1109.5V1120.5L36 1115Z"/></g>
<g fill="none" stroke="#ced0d6" stroke-width="1.9" stroke-linecap="round" stroke-linejoin="round"><rect x="17.4" y="1164.2" width="25" height="21.6" rx="2.2"/><path d="M23 1168.7l5.3 4.6-5.3 4.7M30.2 1179.2h6"/></g>
<g fill="none" stroke="#ced0d6" stroke-width="1.9" stroke-linecap="round" stroke-linejoin="round"><circle cx="29.9" cy="1234.9" r="12.7"/><path d="M29.9 1228v7.6" stroke-width="2.4"/></g><circle cx="29.9" cy="1240.8" r="1.7" fill="#ced0d6"/>
<g fill="none" stroke="#ced0d6" stroke-width="1.9" stroke-linecap="round" stroke-linejoin="round"><circle cx="23.4" cy="1287" r="4"/><circle cx="36.2" cy="1290" r="4"/><path d="M23.4 1291v16.5M36.2 1294v.9a6 6 0 0 1-6 6H23.4"/></g>
<g fill="none" stroke="#ced0d6" stroke-width="1.9" stroke-linecap="round" stroke-linejoin="round"><path d="M2519.7 99.5c2.3-2.6 3-5.2 3-8.3v-3.2a8.1 8.1 0 0 1 16.2 0v3.2c0 3.1.7 5.7 3 8.3Z"/><path d="M2527.6 103.4a3.3 2.2 0 0 0 6.5 0"/></g>
<circle cx="2540.3" cy="81.7" r="6.9" fill="#2b2d30"/><circle cx="2540.3" cy="81.7" r="5.5" fill="#db5c5c"/>
<path d="M2541.5 160.8c-3 2.3-8.3 3.3-13.3 1.8-5.7-1.7-9-6.3-8.3-11.3.8-5.3 6.3-9.7 12.8-9.6 6.1.1 10.7 3.8 10.3 8.9-.4 4.5-4.8 7.7-9.5 7.3-4.1-.4-6.8-3.4-6.2-6.7.5-2.7 3.3-4.5 6.2-4.2 2.3.3 3.7 1.9 3.4 3.7-.3 1.5-1.7 2.3-3.2 2.2" fill="none" stroke="#ced0d6" stroke-width="1.9" stroke-linecap="round" stroke-linejoin="round"/>
<g fill="none" stroke="#ced0d6" stroke-width="1.9" stroke-linecap="round" stroke-linejoin="round"><ellipse cx="2531" cy="203.3" rx="11" ry="4.6"/><path d="M2520 203.3v17.4c0 2.5 4.9 4.6 11 4.6s11-2.1 11-4.6V203.3M2520 209.1c0 2.5 4.9 4.6 11 4.6s11-2.1 11-4.6M2520 214.9c0 2.5 4.9 4.6 11 4.6s11-2.1 11-4.6"/></g>
<g transform="translate(2531,272)"><path d="M-11.6-6.8a5.6 5.6 0 0 1 5.6-5.6h.8a5.2 5.2 0 0 1 5.2 3.4a5.2 5.2 0 0 1 5.2-3.4h.8a5.6 5.6 0 0 1 5.6 5.6v2.6c2 1.4 3 3.4 3 5.4c0 6.3-6.6 11.6-14.6 11.6s-14.6-5.3-14.6-11.6c0-2 1-4 3-5.4Z" fill="#ced0d6"/><rect x="-8.5" y="-9.3" width="7" height="6.4" rx="2.8" fill="#2b2d30"/><rect x="1.6" y="-9.3" width="7" height="6.4" rx="2.8" fill="#2b2d30"/><path d="M-8.5 0.2h17.1v4.4c0 2.6-4 4.4-8.5 4.4s-8.6-1.8-8.6-4.4Z" fill="#2b2d30"/><rect x="-4.3" y="2.2" width="2.3" height="4.8" rx="1.1" fill="#ced0d6"/><rect x="2.1" y="2.2" width="2.3" height="4.8" rx="1.1" fill="#ced0d6"/></g>
<g transform="translate(2531,332.5)"><path d="M-11.6-6.8a5.6 5.6 0 0 1 5.6-5.6h.8a5.2 5.2 0 0 1 5.2 3.4a5.2 5.2 0 0 1 5.2-3.4h.8a5.6 5.6 0 0 1 5.6 5.6v2.6c2 1.4 3 3.4 3 5.4c0 6.3-6.6 11.6-14.6 11.6s-14.6-5.3-14.6-11.6c0-2 1-4 3-5.4Z" fill="#ced0d6"/><rect x="-8.5" y="-9.3" width="7" height="6.4" rx="2.8" fill="#2b2d30"/><rect x="1.6" y="-9.3" width="7" height="6.4" rx="2.8" fill="#2b2d30"/><path d="M-8.5 0.2h17.1v4.4c0 2.6-4 4.4-8.5 4.4s-8.6-1.8-8.6-4.4Z" fill="#2b2d30"/><rect x="-4.3" y="2.2" width="2.3" height="4.8" rx="1.1" fill="#ced0d6"/><rect x="2.1" y="2.2" width="2.3" height="4.8" rx="1.1" fill="#ced0d6"/><path d="M-.8 4.6a3.8 3.8 0 0 1 3.8-3.8h9.8a3.8 3.8 0 0 1 3.8 3.8v5.4a3.8 3.8 0 0 1-3.8 3.8h-.2l.6 3.8-4.7-3.8h-5.5a3.8 3.8 0 0 1-3.8-3.8Z" fill="#2b2d30"/><path d="M.6 4.9a2.7 2.7 0 0 1 2.7-2.7h9.2a2.7 2.7 0 0 1 2.7 2.7v4.9a2.7 2.7 0 0 1-2.7 2.7h-1.4l.5 3.2-4-3.2h-4.3a2.7 2.7 0 0 1-2.7-2.7Z" fill="#ced0d6"/></g>
<path d="M153.25 90.1 l5.75 5.8 l5.75 -5.8" fill="none" stroke="#ced0d6" stroke-width="1.6" stroke-linecap="round" stroke-linejoin="round"/>
<defs><g id="imgf"><rect x=".85" y=".85" width="16.4" height="16.4" rx="2.8" fill="#25324d" stroke="#548af7" stroke-width="1.7"/><circle cx="12.1" cy="6" r="2.2" fill="none" stroke="#548af7" stroke-width="1.5"/><path d="M1.2 11.7l3.6-3.4 10.7 8.7" fill="none" stroke="#548af7" stroke-width="1.6"/></g></defs>
<use href="#imgf" x="256.9" y="131.9"/>
<use href="#imgf" x="256.9" y="167.9"/>
<use href="#imgf" x="256.9" y="203.9"/>
<use href="#imgf" x="256.9" y="239.9"/>
<use href="#imgf" x="256.9" y="275.9"/>
<use href="#imgf" x="256.9" y="311.9"/>
<use href="#imgf" x="256.9" y="347.9"/>
<use href="#imgf" x="256.9" y="383.9"/>
<use href="#imgf" x="256.9" y="419.9"/>
<use href="#imgf" x="256.9" y="455.9"/>
<use href="#imgf" x="256.9" y="491.9"/>
<use href="#imgf" x="256.9" y="527.9"/>
<use href="#imgf" x="256.9" y="563.9"/>
<use href="#imgf" x="256.9" y="599.9"/>
<use href="#imgf" x="256.9" y="635.9"/>
<use href="#imgf" x="256.9" y="671.9"/>
<use href="#imgf" x="256.9" y="707.9"/>
<use href="#imgf" x="256.9" y="743.9"/>
<use href="#imgf" x="256.9" y="779.9"/>
<use href="#imgf" x="256.9" y="815.9"/>
<use href="#imgf" x="256.9" y="851.9"/>
<use href="#imgf" x="256.9" y="887.9"/>
<path d="M756.5 97.9v-9.3l5.25 7.5 5.25-7.5v9.3" fill="none" stroke="#4b7bd2" stroke-width="2.7" stroke-linejoin="miter" stroke-miterlimit="2"/>
<path d="M774.6 87.2v9.8M770.7 93.3l3.9 3.9 3.9-3.9" fill="none" stroke="#4b7bd2" stroke-width="2" stroke-linejoin="miter"/>
<path d="M1039.5 97.9v-9.3l5.25 7.5 5.25-7.5v9.3" fill="none" stroke="#548af7" stroke-width="2.7" stroke-linejoin="miter" stroke-miterlimit="2"/>
<path d="M1057.6 87.2v9.8M1053.7 93.3l3.9 3.9 3.9-3.9" fill="none" stroke="#548af7" stroke-width="2" stroke-linejoin="miter"/>
<path d="M1257.5 97.9v-9.3l5.25 7.5 5.25-7.5v9.3" fill="none" stroke="#4b7bd2" stroke-width="2.7" stroke-linejoin="miter" stroke-miterlimit="2"/>
<path d="M1275.6 87.2v9.8M1271.7 93.3l3.9 3.9 3.9-3.9" fill="none" stroke="#4b7bd2" stroke-width="2" stroke-linejoin="miter"/>
<path d="M1474.5 97.9v-9.3l5.25 7.5 5.25-7.5v9.3" fill="none" stroke="#4b7bd2" stroke-width="2.7" stroke-linejoin="miter" stroke-miterlimit="2"/>
<path d="M1492.6 87.2v9.8M1488.7 93.3l3.9 3.9 3.9-3.9" fill="none" stroke="#4b7bd2" stroke-width="2" stroke-linejoin="miter"/>
<path d="M1728.5 97.9v-9.3l5.25 7.5 5.25-7.5v9.3" fill="none" stroke="#4b7bd2" stroke-width="2.7" stroke-linejoin="miter" stroke-miterlimit="2"/>
<path d="M1746.6 87.2v9.8M1742.7 93.3l3.9 3.9 3.9-3.9" fill="none" stroke="#4b7bd2" stroke-width="2" stroke-linejoin="miter"/>
<path d="M2011.5 97.9v-9.3l5.25 7.5 5.25-7.5v9.3" fill="none" stroke="#4b7bd2" stroke-width="2.7" stroke-linejoin="miter" stroke-miterlimit="2"/>
<path d="M2029.6 87.2v9.8M2025.7 93.3l3.9 3.9 3.9-3.9" fill="none" stroke="#4b7bd2" stroke-width="2" stroke-linejoin="miter"/>
<path d="M2185 97.9v-9.3l5.25 7.5 5.25-7.5v9.3" fill="none" stroke="#4b7bd2" stroke-width="2.7" stroke-linejoin="miter" stroke-miterlimit="2"/>
<path d="M2203.1 87.2v9.8M2199.2 93.3l3.9 3.9 3.9-3.9" fill="none" stroke="#4b7bd2" stroke-width="2" stroke-linejoin="miter"/>
<text class="tt" x="786" y="100.2" fill="#659ff2">主流框架</text>
<text class="tt" x="1758" y="100.2" fill="#659ff2">前端开发</text>
<path d="M1209.8 87l10.2 10.2M1220 87l-10.2 10.2" stroke="#868a91" stroke-width="1.4"/>
<path d="M2286.75 88.35 l7.25 7.3 l7.25 -7.3" fill="none" stroke="#ced0d6" stroke-width="1.6" stroke-linecap="round" stroke-linejoin="round"/>
<path d="M2335.6 85.2H2350.5M2371.7 85.2H2378.6" stroke="#dfe1e5" stroke-width="1.5"/>
<path d="M2335.6 90H2350.5M2371.7 90H2378.6" stroke="#dfe1e5" stroke-width="1.5"/>
<path d="M2335.6 94.5H2350.5M2371.7 94.5H2378.6" stroke="#dfe1e5" stroke-width="1.5"/>
<path d="M2335.6 99.1H2350.5M2371.7 99.1H2378.6" stroke="#dfe1e5" stroke-width="1.5"/>
<rect x="2383.2" y="84.1" width="8.5" height="15.9" rx="2" fill="none" stroke="#dfe1e5" stroke-width="1.6"/>
<g fill="none" stroke="#dfe1e5" stroke-width="1.6"><rect x="2412.8" y="84.1" width="16.1" height="15.9" rx="2.6"/><circle cx="2424.2" cy="89" r="2"/><path d="M2413 95.8l5.2-4.8 10.6 8.8"/></g>
<circle cx="2471" cy="85.2" r="1.8" fill="#dfe1e5"/>
<circle cx="2471" cy="92.5" r="1.8" fill="#dfe1e5"/>
<circle cx="2471" cy="99.6" r="1.8" fill="#dfe1e5"/>
<rect x="640" y="457.2" width="16" height="15.3" rx="1" fill="#ced0d6"/><path d="M641.8 469.5l3.9-4.8 2.7 3 2-2 3.8 3.8Z" fill="#1e1f22"/>
<text class="ct" x="710" y="158.75" fill="#6aab73">打开</text>
<text class="ct" x="834" y="158.75" fill="#6aab73">，点击</text>
<text class="ct" x="688" y="221.75" fill="#bcbec4">选择</text>
<text class="ct" x="757" y="221.75" fill="#bcbec4">，输入仓库</text>
<text class="ct" x="880" y="221.75" fill="#bcbec4">，完成后等待</text>
<text class="ct" x="1076" y="221.75" fill="#bcbec4">拉取代码</text>
<text class="ct" x="721" y="347.75" fill="#bcbec4">牵出开发分支</text>
<text class="ct" x="688" y="410.75" fill="#bcbec4">每个人单独一条开发分支，以</text>
<text class="ct" x="988" y="410.75" fill="#6aab73">你的名字某字母</text>
<text class="ct" x="1125" y="410.75" fill="#bcbec4">定义，例如彭于晏的开发分支为</text>
<text class="ct" x="0" y="0" fill="#c77dbb" transform="translate(732,568.25) skewX(-12)">分支策略</text>
<text class="ct" x="724" y="646" fill="#bcbec4">分支类型</text>
<text class="ct" x="884" y="646" fill="#bcbec4">描述</text>
<text class="ct" x="856" y="709" fill="#bcbec4">稳定生产版本</text>
<text class="ct" x="856" y="740.5" fill="#bcbec4">集成分支，每人一条</text>
<text class="ct" x="856" y="772" fill="#bcbec4">功能开发分支</text>
<text class="ct" x="900" y="803.5" fill="#bcbec4">修复分支</text>
<text class="ct" x="856" y="835" fill="#bcbec4">配置</text>
<text class="ct" x="903" y="835" fill="#bcbec4">工具调整</text>
<text class="ct" x="856" y="866.5" fill="#bcbec4">测试功能分支</text>
<defs><path id="wv" d="M702 0l3.5 -3.5l3.5 3.5l3.5 -3.5l3.5 3.5l3.5 -3.5l3.5 3.5l3.5 -3.5l3.5 3.5l3.5 -3.5l3.5 3.5l3.5 -3.5l3.5 3.5l3.5 -3.5l3.5 3.5l3.5 -3.5l3.5 3.5l3.5 -3.5l3.5 3.5l3.5 -3.5l3.5 3.5l3.5 -3.5l3.5 3.5l3.5 -3.5l3.5 3.5l3.5 -3.5l3.5 3.5l3.5 -3.5l3.5 3.5l3.5 -3.5l3.5 3.5l3.5 -3.5l3.5 3.5l3.5 -3.5l3.5 3.5l3.5 -3.5l3.5 3.5l3.5 -3.5l3.5 3.5l3.5 -3.5l3.5 3.5l3.5 -3.5l3.5 3.5l3.5 -3.5l3.5 3.5l3.5 -3.5l3.5 3.5l3.5 -3.5l3.5 3.5l3.5 -3.5l3.5 3.5l3.5 -3.5l3.5 3.5l3.5 -3.5l3.5 3.5l3.5 -3.5l3.5 3.5l3.5 -3.5l3.5 3.5l3.5 -3.5l3.5 3.5l3.5 -3.5l3.5 3.5l3.5 -3.5l3.5 3.5l3.5 -3.5l3.5 3.5l3.5 -3.5l3.5 3.5l3.5 -3.5l3.5 3.5l3.5 -3.5l3.5 3.5l3.5 -3.5l3.5 3.5l3.5 -3.5l3.5 3.5l3.5 -3.5l3.5 3.5l3.5 -3.5l3.5 3.5l3.5 -3.5l3.5 3.5l3.5 -3.5l3.5 3.5l3.5 -3.5l3.5 3.5l3.5 -3.5l3.5 3.5l3.5 -3.5l3.5 3.5l3.5 -3.5l3.5 3.5l3.5 -3.5l3.5 3.5l3.5 -3.5l3.5 3.5l3.5 -3.5l3.5 3.5l3.5 -3.5l3.5 3.5l3.5 -3.5l3.5 3.5l3.5 -3.5l3.5 3.5l3.5 -3.5l3.5 3.5l3.5 -3.5l3.5 3.5l3.5 -3.5l3.5 3.5l3.5 -3.5l3.5 3.5l3.5 -3.5l3.5 3.5l3.5 -3.5l3.5 3.5l3.5 -3.5l3.5 3.5l3.5 -3.5l3.5 3.5l3.5 -3.5l3.5 3.5l3.5 -3.5l3.5 3.5l3.5 -3.5l3.5 3.5l3.5 -3.5l3.5 3.5l3.5 -3.5l3.5 3.5l3.5 -3.5l3.5 3.5l3.5 -3.5l3.5 3.5l3.5 -3.5l3.5 3.5l3.5 -3.5l3.5 3.5l3.5 -3.5l3.5 3.5l3.5 -3.5l3.5 3.5l3.5 -3.5l3.5 3.5l3.5 -3.5l3.5 3.5l3.5 -3.5l3.5 3.5l3.5 -3.5l3.5 3.5l3.5 -3.5l3.5 3.5l3.5 -3.5l3.5 3.5l3.5 -3.5l3.5 3.5l3.5 -3.5l3.5 3.5l3.5 -3.5l3.5 3.5l3.5 -3.5l3.5 3.5l3.5 -3.5l3.5 3.5l3.5 -3.5l3.5 3.5l3.5 -3.5l3.5 3.5l3.5 -3.5l3.5 3.5l3.5 -3.5l3.5 3.5l3.5 -3.5l3.5 3.5l3.5 -3.5l3.5 3.5l3.5 -3.5l3.5 3.5l3.5 -3.5l3.5 3.5l3.5 -3.5l3.5 3.5l3.5 -3.5l3.5 3.5l3.5 -3.5l3.5 3.5l3.5 -3.5l3.5 3.5" fill="none" stroke="#8a733f" stroke-width="1.4"/></defs>
<use href="#wv" y="652.4"/>
<use href="#wv" y="683.9"/>
<use href="#wv" y="715.4"/>
<use href="#wv" y="746.9"/>
<use href="#wv" y="778.4"/>
<use href="#wv" y="809.9"/>
<use href="#wv" y="841.4"/>
<use href="#wv" y="872.9"/>
<path d="M688 354.15l3.5 -3.5l3.5 3.5l3.5 -3.5l3.5 3.5l3.5 -3.5l3.5 3.5l3.5 -3.5l3.5 3.5l3.5 -3.5l3.5 3.5" fill="none" stroke="#8a733f" stroke-width="1.3"/>
<path d="M2268.6 147.7l6.6-11.7a2.2 2.2 0 0 1 3.8 0l6.6 11.7a2.2 2.2 0 0 1-1.9 3.3h-13.2a2.2 2.2 0 0 1-1.9-3.3Z" fill="#c9a44f"/><path d="M2277.1 140v5.6" stroke="#1e1f22" stroke-width="2.2" stroke-linecap="round"/><circle cx="2277.1" cy="148.4" r="1.3" fill="#1e1f22"/>
<path d="M2325.4 147.7l6.6-11.7a2.2 2.2 0 0 1 3.8 0l6.6 11.7a2.2 2.2 0 0 1-1.9 3.3h-13.2a2.2 2.2 0 0 1-1.9-3.3Z" fill="#8f7b42"/><path d="M2333.9 140v5.6" stroke="#1e1f22" stroke-width="2.2" stroke-linecap="round"/><circle cx="2333.9" cy="148.4" r="1.3" fill="#1e1f22"/>
<path d="M2383.2 142.6l4.7 4.8 10.3-11.7" fill="none" stroke="#57a05c" stroke-width="2.6"/><path d="M2382.5 153.2l2.7-2.5 2.7 2.5 2.7-2.5 2.7 2.5 2.7-2.5 2.2 2" fill="none" stroke="#57a05c" stroke-width="1.1"/>
<path d="M2444.6 146 l5.4 -5.6 l5.4 5.6" fill="none" stroke="#ced0d6" stroke-width="1.5" stroke-linecap="round" stroke-linejoin="round"/>
<path d="M2475.6 140.4 l5.4 5.6 l5.4 -5.6" fill="none" stroke="#ced0d6" stroke-width="1.5" stroke-linecap="round" stroke-linejoin="round"/>
<path d="M348.2 942.3l9.6 9.6M357.8 942.3l-9.6 9.6" stroke="#868a91" stroke-width="1.4"/>
<rect x="22" y="1341.9" width="10.3" height="10" rx="2.3" fill="#25324d" stroke="#548af7" stroke-width="1.7"/>
<path d="M166.5 1340.6l6 6-6 6" fill="none" stroke="#a3a6ad" stroke-width="1.5"/>
<path d="M242.5 1340.6l6 6-6 6" fill="none" stroke="#a3a6ad" stroke-width="1.5"/>
<path d="M326.4 1340.6l6 6-6 6" fill="none" stroke="#a3a6ad" stroke-width="1.5"/>
<path d="M349.8 1352.2v-9.3l5.25 7.5 5.25-7.5v9.3" fill="none" stroke="#548af7" stroke-width="2.7" stroke-linejoin="miter" stroke-miterlimit="2"/>
<path d="M367.9 1341.5v9.8M364 1347.6l3.9 3.9 3.9-3.9" fill="none" stroke="#548af7" stroke-width="2" stroke-linejoin="miter"/>
<g fill="none" stroke="#ced0d6" stroke-width="1.7" stroke-linecap="round" stroke-linejoin="round"><path d="M2199.5 1337.5h-1.3a2.4 2.4 0 0 0-2.4 2.4v3.2c0 1.5-1 2.5-2.3 2.7 1.3.2 2.3 1.2 2.3 2.7v3.2a2.4 2.4 0 0 0 2.4 2.4h1.3M2204 1337.5h1.3a2.4 2.4 0 0 1 2.4 2.4v3.2c0 1.5 1 2.5 2.3 2.7-1.3.2-2.3 1.2-2.3 2.7v3.2a2.4 2.4 0 0 1-2.4 2.4h-1.3"/></g>
<g transform="translate(2370,1346.5) scale(.72)"><path d="M-11.6-6.8a5.6 5.6 0 0 1 5.6-5.6h.8a5.2 5.2 0 0 1 5.2 3.4a5.2 5.2 0 0 1 5.2-3.4h.8a5.6 5.6 0 0 1 5.6 5.6v2.6c2 1.4 3 3.4 3 5.4c0 6.3-6.6 11.6-14.6 11.6s-14.6-5.3-14.6-11.6c0-2 1-4 3-5.4Z" fill="#ced0d6"/><rect x="-8.5" y="-9.3" width="7" height="6.4" rx="2.8" fill="#2b2d30"/><rect x="1.6" y="-9.3" width="7" height="6.4" rx="2.8" fill="#2b2d30"/><path d="M-8.5 0.2h17.1v4.4c0 2.6-4 4.4-8.5 4.4s-8.6-1.8-8.6-4.4Z" fill="#2b2d30"/></g>
<circle cx="2374.8" cy="1351.8" r="7.3" fill="#2b2d30"/><circle cx="2374.8" cy="1351.8" r="6.2" fill="#db5c5c"/><path d="M2372.4 1349.4l4.8 4.8M2377.2 1349.4l-4.8 4.8" stroke="#2b2d30" stroke-width="1.8"/>
<g fill="none" stroke="#ced0d6" stroke-width="1.7"><rect x="2515.4" y="1343" width="13.6" height="11.2" rx="2.4"/><path d="M2522.2 1347v3.3M2524.8 1343v-1.8a4.2 4.2 0 0 1 8.4 0v2.6"/></g>
</svg>
<div class="a" style="left:1025.1px;top:541px;width:509.2px;height:277px;background:#2b2d30;border-radius:12px;box-shadow:0 0 0 1.3px #46484d,0 14px 56px 10px rgba(0,0,0,.30),0 4px 16px 2px rgba(0,0,0,.20)"></div>
<div class="t" style="left:1086.3px;top:559.1px;font-size:20px;color:#dfe1e5;transform:scaleX(0.95);transform-origin:0 50%;">Create Branch from master</div>
<div class="t" style="left:1051px;top:623.9px;font-size:20px;color:#dfe1e5;transform:scaleX(0.951);transform-origin:0 50%;">New branch name:</div>
<div class="a" style="left:1047.3px;top:652.8px;width:467.7px;height:40px;border-radius:4.5px;background:#3574f0"></div>
<div class="a" style="left:1050.3px;top:655.8px;width:461.7px;height:34px;border-radius:2px;background:#2b2d30;box-shadow:inset 0 0 0 1.2px #1c2740"></div>
<div class="t" style="left:1057.6px;top:664.4px;font-size:20px;color:#ced0d6;letter-spacing:0.15px;">dev/pyy</div>
<div class="a" style="left:1128.3px;top:660px;width:1.3px;height:24.5px;background:#ced0d6;"></div>
<div class="a" style="left:1050px;top:708px;width:24px;height:24px;border-radius:4.5px;background:#3574f0"></div>
<div class="t" style="left:1086px;top:711.1px;font-size:20px;color:#dfe1e5;transform:scaleX(0.962);transform-origin:0 50%;">Checkout branch</div>
<div class="a" style="left:1086px;top:731.2px;width:12.3px;height:1.3px;background:#dfe1e5;"></div>
<div class="a" style="left:1256px;top:708px;width:23.8px;height:24px;border-radius:4.5px;background:#393b40;box-shadow:inset 0 0 0 1.3px #4e5157"></div>
<div class="t" style="left:1293px;top:711.1px;font-size:20px;color:#6f737a;transform:scaleX(0.972);transform-origin:0 50%;">Overwrite existing branch</div>
<div class="a" style="left:1325.5px;top:731.2px;width:6.5px;height:1.3px;background:#6f737a;"></div>
<div class="a" style="left:1278px;top:759.2px;width:108px;height:41.7px;border-radius:6px;background:#3574f0"></div>
<div class="t" style="left:1304.4px;top:771.3px;font-size:20px;color:#fff;font-weight:700;transform:scaleX(0.909);transform-origin:0 50%;">Create</div>
<div class="a" style="left:1404.2px;top:759.2px;width:107.7px;height:41.7px;border-radius:6px;box-shadow:inset 0 0 0 1.3px #4e5157"></div>
<div class="t" style="left:1430.5px;top:771.3px;font-size:20px;color:#dfe1e5;transform:scaleX(0.898);transform-origin:0 50%;">Cancel</div>
<svg width="2560" height="1368" viewBox="0 0 2560 1368">
<g transform="translate(1044,557)"><defs><linearGradient id="wsg0" x1="0" y1="0" x2="1" y2="1"><stop offset="0" stop-color="#087cfa"/><stop offset=".55" stop-color="#07a5f5"/><stop offset="1" stop-color="#12d6e8"/></linearGradient></defs><path d="M.6 1.2Q.6.3 1.6.3L14.5 0 24 12 23.6 22.5 12 23.2 0 15.8Z" fill="url(#wsg0)"/><path d="M15.5 1.6L22.6 2.6 21.2 13.5ZM1.4 15.6L2.4 24 16 23 10 16.5Z" fill="#f7ef3c"/><path d="M9 22.8L16 23 23.6 22.4 23.8 17Z" fill="#1fd1a0" opacity=".0"/><rect x="4.5" y="4.4" width="14.8" height="14.9" fill="#000"/><rect x="6.2" y="16.4" width="6" height="1.5" fill="#fff"/><path d="M6 6.2l1.25 5.5 1.4-4.3 1.4 4.3 1.25-5.5M16.9 7.3c-.45-.7-1.1-1-1.85-1-1 0-1.7.55-1.7 1.35 0 .85.6 1.15 1.75 1.45 1.2.3 1.85.65 1.85 1.5 0 .85-.75 1.4-1.85 1.4-.85 0-1.6-.35-2.1-1.05" fill="none" stroke="#fff" stroke-width="1.4" stroke-linejoin="miter"/></g>
<path d="M1501.3 562.2l14.6 14.6M1515.9 562.2l-14.6 14.6" stroke="#dfe1e5" stroke-width="1.6"/>
<path d="M1055.3 720.4l4.9 4.9 8.8-9.8" fill="none" stroke="#fff" stroke-width="2.7"/>
</svg>
</body></html>
